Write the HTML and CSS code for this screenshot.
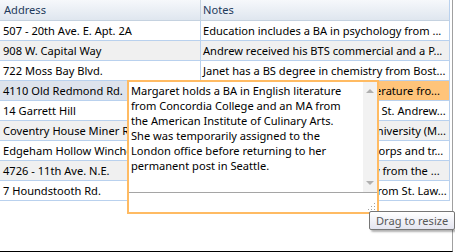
FILE: index.html
```html
<!DOCTYPE html>
<html lang="en">
  <head>
    <meta charset="UTF-8" />
    <meta name="viewport" content="width=device-width, initial-scale=1.0" />
    <title>Employees</title>
    <link rel="stylesheet" href="styles.css">
  </head>

  <body>
    <div class="frame">
      <div class="grid">
        <div class="row head">
          <div class="cell addr">Address</div>
          <div class="cell notes">Notes</div>
        </div>
        <div class="row">
          <div class="cell addr">507 - 20th Ave. E. Apt. 2A</div>
          <div class="cell notes">Education includes a BA in psychology from ...</div>
        </div>
        <div class="row alt">
          <div class="cell addr">908 W. Capital Way</div>
          <div class="cell notes">Andrew received his BTS commercial and a P...</div>
        </div>
        <div class="row">
          <div class="cell addr">722 Moss Bay Blvd.</div>
          <div class="cell notes">Janet has a BS degree in chemistry from Bost...</div>
        </div>
        <div class="row selected">
          <div class="cell addr">4110 Old Redmond Rd.</div>
          <div class="cell notes">Margaret holds a BA in English literature fro...</div>
        </div>
        <div class="row">
          <div class="cell addr">14 Garrett Hill</div>
          <div class="cell notes">Steven Buchanan graduated from St. Andrew...</div>
        </div>
        <div class="row alt">
          <div class="cell addr">Coventry House Miner Rd.</div>
          <div class="cell notes">Michael is a graduate of Sussex University (M...</div>
        </div>
        <div class="row">
          <div class="cell addr">Edgeham Hollow Winchester Way</div>
          <div class="cell notes">Robert King served in the Peace Corps and tr...</div>
        </div>
        <div class="row alt">
          <div class="cell addr">4726 - 11th Ave. N.E.</div>
          <div class="cell notes">Laura received a BA in psychology from the ...</div>
        </div>
        <div class="row">
          <div class="cell addr">7 Houndstooth Rd.</div>
          <div class="cell notes">Anne has a BA degree in English from St. Law...</div>
        </div>
      </div>

      <!-- popup editor for the Notes cell -->
      <div class="editor">
        <div class="editor-body">
          <div class="editor-text">
            Margaret holds a BA in English literature<br>
            from Concordia College and an MA from<br>
            the American Institute of Culinary Arts.<br>
            She was temporarily assigned to the<br>
            London office before returning to her<br>
            permanent post in Seattle.
          </div>
          <div class="scrollbar">
            <span class="arrow up"></span>
            <span class="arrow down"></span>
          </div>
        </div>
        <div class="editor-foot">
          <svg class="grip" width="9" height="9" viewBox="0 0 9 9">
            <rect x="7" y="1" width="1" height="1" fill="#a0a0a0" />
            <rect x="4" y="4" width="1" height="1" fill="#a0a0a0" />
            <rect x="7" y="4" width="1" height="1" fill="#a0a0a0" />
            <rect x="1" y="7" width="1" height="1" fill="#a0a0a0" />
            <rect x="4" y="7" width="1" height="1" fill="#a0a0a0" />
            <rect x="7" y="7" width="1" height="1" fill="#a0a0a0" />
          </svg>
        </div>
      </div>

      <div class="tip">Drag to resize</div>
    </div>
  </body>
</html>
```

FILE: styles.css
```css
body {
  margin: 0;
  font-family: "Noto Sans", "Open Sans", sans-serif;
  font-size: 11.1px;
  color: #000;
  background: #fff;
}
.frame {
  position: relative;
  width: 452px;
  height: 251px;
  border-right: 1px solid #a0a0a0;
  border-bottom: 1px solid #000;
}
.grid {
  width: 450px;
  border-right: 1px solid #b9d1ee;
  box-sizing: border-box;
}
.row {
  display: flex;
  height: 20px;
  border-bottom: 1px solid #b9d1ee;
  box-sizing: border-box;
}
.row.head {
  height: 21px;
  background: linear-gradient(#f6f8fb, #dfe6ef);
  border-bottom: 1px solid #c5d2e0;
  color: #1e395b;
}
.row.alt {
  background: #f0f0f0;
}
.cell {
  line-height: 19px;
  white-space: nowrap;
  overflow: hidden;
  box-sizing: border-box;
}
.cell.addr {
  width: 201px;
  padding-left: 3px;
  border-right: 1px solid #b9d1ee;
}
.row.head .cell.addr {
  padding-left: 4px;
  line-height: 20px;
  border-right-color: #c5d2e0;
}
.row.head .cell.notes {
  line-height: 20px;
}
.cell.notes {
  flex: 1;
  padding-left: 2px;
}
.row.selected .cell.addr {
  background: #dee3ec;
}
.row.selected .cell.notes {
  background: #ffc47a;
}

.editor {
  position: absolute;
  left: 127px;
  top: 80px;
  width: 252px;
  height: 134px;
  border: 2px solid #ffbb63;
  box-sizing: border-box;
  background: #fff;
  display: flex;
  flex-direction: column;
}
.editor-body {
  flex: 1;
  display: flex;
  border-bottom: 1px solid #a5a5a5;
}
.editor-text {
  flex: 1;
  padding: 1px 0 0 2px;
  line-height: 15px;
  white-space: nowrap;
}
.scrollbar {
  width: 14px;
  background: #f2f2f2;
  display: flex;
  flex-direction: column;
  justify-content: space-between;
  align-items: center;
  padding: 7px 0 7px;
}
.arrow {
  width: 0;
  height: 0;
  border-left: 4px solid transparent;
  border-right: 4px solid transparent;
}
.arrow.up {
  border-bottom: 4px solid #b0b0b0;
}
.arrow.down {
  border-top: 4px solid #b0b0b0;
}
.editor-foot {
  height: 19px;
  display: flex;
  justify-content: flex-end;
  align-items: flex-end;
}
.grip {
  display: block;
  margin: 0 1px 1px 0;
}

.tip {
  position: absolute;
  left: 369px;
  top: 211px;
  height: 19px;
  padding: 0 6px;
  border: 1px solid #767676;
  border-radius: 2px;
  background: linear-gradient(#ffffff, #e4e5f0);
  box-shadow: 2px 2px 2px rgba(0, 0, 0, 0.3);
  line-height: 17px;
  color: #575757;
  white-space: nowrap;
  box-sizing: border-box;
}
```
